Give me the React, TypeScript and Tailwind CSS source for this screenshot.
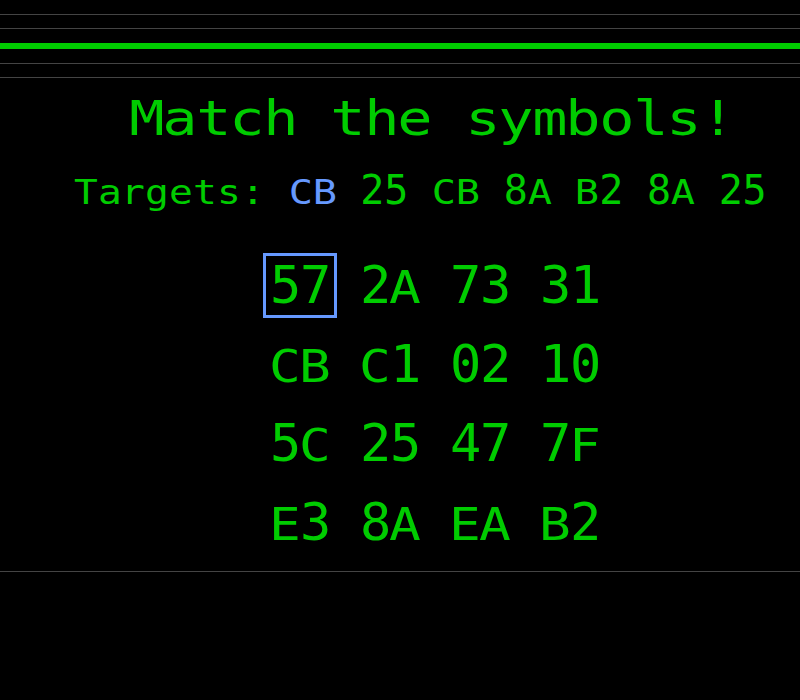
type TokenProps = {
  text: string;
  cellClass: string;
  digitClass: string;
  letterClass: string;
};

function Token({ text, cellClass, digitClass, letterClass }: TokenProps) {
  return (
    <>
      {text.split('').map((c, i) => (
        <span
          key={i}
          className={`inline-block text-center leading-none ${cellClass} ${/[0-9]/.test(c) ? digitClass : letterClass}`}
        >
          {c === ' ' ? '\u00a0' : c}
        </span>
      ))}
    </>
  );
}

const targets = ['CB', '25', 'CB', '8A', 'B2', '8A', '25'];

const grid = [
  ['57', '2A', '73', '31'],
  ['CB', 'C1', '02', '10'],
  ['5C', '25', '47', '7F'],
  ['E3', '8A', 'EA', 'B2'],
];

export default function App() {
  return (
    <div className="w-[800px] h-[700px] overflow-hidden bg-black pt-[14px] font-['DejaVu_Sans_Mono',monospace] text-[#00cc00]">
      <div className="h-px bg-[#444444]" />
      <div className="mt-[13px] h-px bg-[#444444]" />
      <div className="mt-[14px] h-[6px] bg-[#00cc00]" />
      <div className="mt-[14px] h-px bg-[#444444]" />
      <div className="mt-[13px] h-px bg-[#444444]" />

      <div className="flex flex-col items-center pl-[64px]">
        <h1 className="mt-[12px] whitespace-nowrap text-[48px] leading-[56px]">
          <Token
            text="Match the symbols!"
            cellClass="w-[33.6px]"
            digitClass="text-[48px]"
            letterClass="text-[48px] scale-x-[1.22]"
          />
        </h1>

        <div className="mt-[20px] whitespace-nowrap text-[40px] leading-[48px]">
          <Token text="Targets: " cellClass="w-[23.9px]" digitClass="text-[40px]" letterClass="text-[33px] scale-x-[1.2]" />
          {targets.map((t, i) => (
            <span key={i} className={i === 0 ? 'text-[#6699ff]' : ''}>
              <Token text={`${t} `} cellClass="w-[23.9px]" digitClass="text-[40px]" letterClass="text-[33px] scale-x-[1.22]" />
            </span>
          ))}
        </div>

        <div className="ml-[6px] mt-[32px] grid grid-cols-[repeat(4,90px)]">
          {grid.flatMap((row, r) =>
            row.map((code, c) => (
              <div key={`${r}-${c}`} className="h-[79px] text-center text-[52px] leading-[79px]">
                <span className="relative inline-block leading-none">
                  <Token text={code} cellClass="w-[30px]" digitClass="text-[52px]" letterClass="text-[44px] scale-x-[1.2]" />
                  {r === 0 && c === 0 && (
                    <span className="absolute -bottom-[7px] -left-[7px] -right-[7px] -top-[6px] border-[3px] border-[#6699ff]" />
                  )}
                </span>
              </div>
            ))
          )}
        </div>
      </div>

      <div className="mt-[9px] h-px bg-[#444444]" />
    </div>
  );
}
